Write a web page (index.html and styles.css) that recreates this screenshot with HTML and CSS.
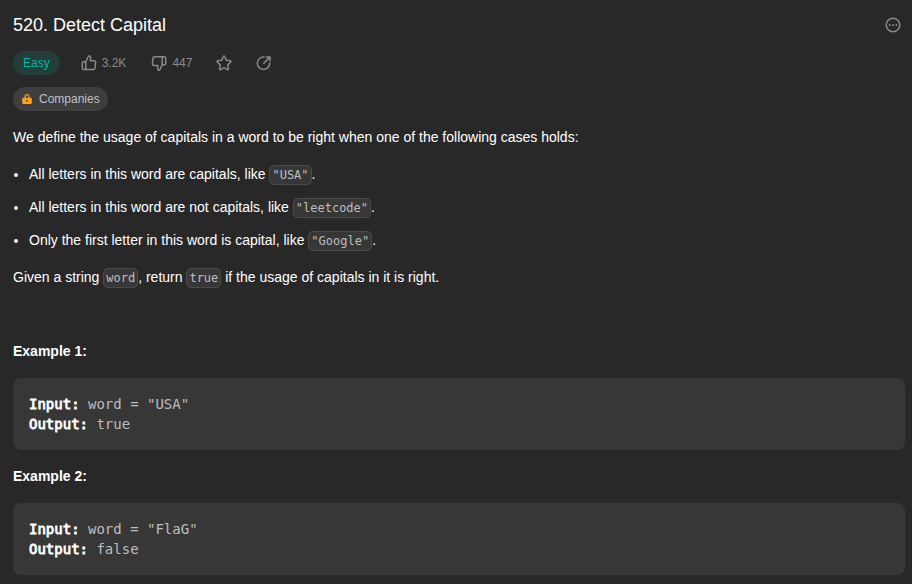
FILE: index.html
```html
<!DOCTYPE html>
<html lang="en">
<head>
<meta charset="utf-8">
<title>520. Detect Capital</title>
<link rel="stylesheet" href="styles.css">
</head>
<body>
<main class="problem">
  <header class="head">
    <h1 class="title">520. Detect Capital</h1>
    <svg class="icon more" viewBox="0 0 16 16"><circle cx="8" cy="8" r="6.800"/><path d="M4.700 8h.01M8 8h.01M11.300 8h.01" stroke-width="1.9"/></svg>
  </header>
  <div class="meta">
    <span class="easy">Easy</span>
    <span class="vote up"><svg class="icon" viewBox="0 0 16 16"><path d="M4.800 6.800 7.200 1.800C7.500 1 8.300.7 8.900 1.100c.7.500.8 1.300.7 2.100L9.300 5.700h3.900c.9 0 1.500.7 1.400 1.600l-.6 5.700c-.1.900-.7 1.500-1.600 1.500H4.800zM4.800 6.800H2.600c-.8 0-1.300.5-1.300 1.300v5.100c0 .8.500 1.300 1.300 1.300h2.200"/></svg>3.2K</span>
    <span class="vote down"><svg class="icon" viewBox="0 0 16 16"><path d="M11.200 9.700 9 14.500c-.3.700-1.100 1-1.700.6-.7-.5-.8-1.300-.7-2.100l.3-2.500H2.800c-.9 0-1.500-.7-1.400-1.600L2 3.200c.1-.9.700-1.500 1.600-1.500h7.600zM11.200 9.700h2.200c.8 0 1.300-.5 1.300-1.300V3c0-.8-.5-1.300-1.300-1.300h-2.200"/></svg>447</span>
    <svg class="icon star" viewBox="0 0 16 16"><path d="M7.400 1.500c.3-.6.900-.6 1.200 0l1.700 3.700 4 .6c.6.1.8.8.4 1.200L11.800 9.900l.7 4c.1.600-.5 1-1 .7L8 12.700l-3.500 1.900c-.5.3-1.100-.1-1-.7l.7-4L1.300 7c-.4-.4-.2-1.100.4-1.200l4-.6z"/></svg>
    <svg class="icon share" viewBox="0 0 16 16"><path d="M8 2A6.200 6.200 0 1 0 13.700 8M7.800 8.300 13.600 2.400M10.200 1.900h3.800v3.800"/></svg>
  </div>
  <div class="tags">
    <span class="companies"><svg class="lock" viewBox="0 0 12 12"><path class="shackle" d="M4.100 5V3.500a1.900 1.900 0 0 1 3.800 0V5"/><path d="M2.200 4.800h7.600a1 1 0 0 1 1 1v3.900a1.200 1.200 0 0 1-1.200 1.200H2.400a1.200 1.200 0 0 1-1.200-1.200V5.800a1 1 0 0 1 1-1z"/><circle class="keyhole" cx="6" cy="7.700" r=".9"/></svg>Companies</span>
  </div>
  <section class="content">
    <p>We define the usage of capitals in a word to be right when one of the following cases holds:</p>
    <ul>
      <li>All letters in this word are capitals, like <code>"USA"</code>.</li>
      <li>All letters in this word are not capitals, like <code>"leetcode"</code>.</li>
      <li>Only the first letter in this word is capital, like <code>"Google"</code>.</li>
    </ul>
    <p>Given a string <code>word</code>, return <code>true</code> if the usage of capitals in it is right.</p>
    <p>&nbsp;</p>
    <p><strong>Example 1:</strong></p>
<pre><strong>Input:</strong> word = "USA"
<strong>Output:</strong> true</pre>
    <p><strong>Example 2:</strong></p>
<pre><strong>Input:</strong> word = "FlaG"
<strong>Output:</strong> false</pre>
  </section>
</main>
</body>
</html>
```
FILE: styles.css
```css
* { box-sizing: border-box; }
body {
  margin: 0;
  height: 584px;
  overflow: hidden;
  background: #282828;
  color: #fff;
  font: 14px/21px "Liberation Sans", Arial, sans-serif;
}
.problem { padding: 13px 7px 0 13px; }
.head { display: flex; justify-content: space-between; align-items: center; height: 24px; padding-right: 4px; }
.title { margin: 0; font-size: 18px; font-weight: 400; line-height: 24px; }
.icon {
  width: 16px;
  height: 16px;
  flex: none;
  fill: none;
  stroke: #8a8a8a;
  stroke-width: 1.5;
  stroke-linecap: round;
  stroke-linejoin: round;
}
.meta { display: flex; align-items: center; height: 24px; margin-top: 14px; font-size: 12px; line-height: 16px; color: #8a8a8a; }
.easy { padding: 4px 10px; border-radius: 12px; background: #233d38; color: #00b8a3; }
.vote { display: flex; align-items: center; gap: 5px; }
.up { margin-left: 21px; }
.down { margin-left: 25px; }
.star { margin-left: 24px; }
.share { margin-left: 24px; }
.tags { display: flex; margin-top: 12px; }
.companies { display: flex; align-items: center; height: 24px; padding: 0 8px; gap: 6px; border-radius: 12px; background: #3e3e3e; color: #bfc0c3; font-size: 12px; line-height: 16px; }
.lock { width: 12px; height: 12px; fill: #ffa116; }
.lock .shackle { fill: none; stroke: #ffa116; stroke-width: 1.2; }
.lock .keyhole { fill: #3e3e3e; }
.content { padding-top: 16px; }
.content p { margin: 0 0 16px; }
.content ul { margin: 0 0 16px; padding-left: 16px; }
.content li { margin-bottom: 12px; }
.content li:last-child { margin-bottom: 0; }
code, pre { font-family: "DejaVu Sans Mono", monospace; color: #bdbec0; }
code { padding: 2px; border: 1px solid #4b4b4b; border-radius: 5px; background: #373737; font-size: 12px; line-height: 1; }
pre { margin: 0 0 16px; padding: 16px; border-radius: 8px; background: #373737; font-size: 14px; line-height: 20px; }
pre strong { color: #fff; font-weight: 400; -webkit-text-stroke: 0.8px #fff; }
```
